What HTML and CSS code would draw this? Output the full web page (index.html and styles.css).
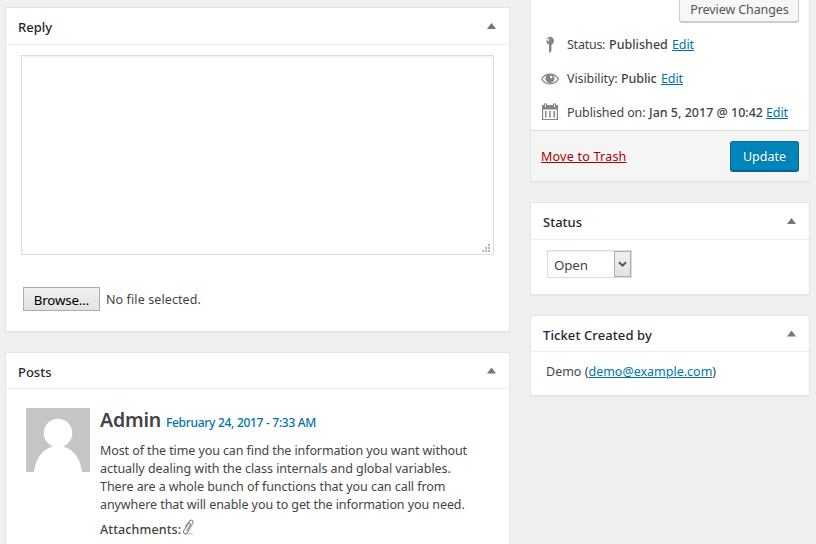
FILE: index.html
```html
<!DOCTYPE html>
<html lang="en">
<head>
<meta charset="utf-8">
<title>Edit Ticket</title>
<link rel="stylesheet" href="styles.css">
</head>
<body>
<div class="layout">
  <main class="column">
    <section class="panel reply">
      <header class="panel-head"><h2>Reply</h2><i class="toggle"></i></header>
      <div class="reply-body">
        <div class="editor">
          <svg class="grip" width="8" height="8" viewBox="0 0 8 8" fill="#b5b5b5"><path d="M6 0h2v2H6zM3 3h2v2H3zM6 3h2v2H6zM0 6h2v2H0zM3 6h2v2H3zM6 6h2v2H6z"/></svg>
        </div>
        <div class="file"><button class="browse">Browse…</button><span class="file-name">No file selected.</span></div>
      </div>
    </section>
    <section class="panel posts">
      <header class="panel-head"><h2>Posts</h2><i class="toggle"></i></header>
      <article class="post">
        <svg class="avatar" width="64" height="64" viewBox="0 0 64 64"><path fill="#c5c5c5" d="M0 0h64v64H0z"/><path fill="#fff" d="M8 64C9.500 50 17 41 27 38.500A14.300 14.300 0 1 1 37 38.500C47 41 54.500 50 56 64z"/></svg>
        <div class="post-content">
          <div class="post-head"><strong class="author">Admin</strong><span class="date">February 24, 2017 - 7:33 AM</span></div>
          <p class="post-text"><span class="l1">Most of the time you can find the information you want without</span><br><span class="l2">actually dealing with the class internals and global variables.</span><br><span class="l3">There are a whole bunch of functions that you can call from</span><br><span class="l4">anywhere that will enable you to get the information you need.</span></p>
          <div class="attachments"><strong>Attachments:</strong><svg width="13" height="17" viewBox="0 0 13 17" fill="none"><path d="M3 15h8" stroke="#ddd" stroke-width="2"/><path d="M3.500 7.500L7.500 2C9 .2 12 1.500 10.800 4L5.500 13.500C4 16 .5 14.500 1.800 11.500L6 5C7 3.300 9 4.300 8.200 6L4.800 11.500" stroke="#888" stroke-width="1.100" stroke-linecap="round"/></svg></div>
        </div>
      </article>
    </section>
  </main>
  <aside class="column side">
    <section class="panel publish">
      <div class="preview-row"><button class="preview">Preview Changes</button></div>
      <ul class="meta">
        <li><svg width="18" height="18" viewBox="0 0 18 18" fill="#82878c"><path fill-rule="evenodd" d="M9 1.700a4.200 4.200 0 0 1 1.500 8v5.800L9 18l-1-1V9.700A4.200 4.200 0 0 1 9 1.700zM7.200 3.700a1.100 1.100 0 1 0 .1 0z"/></svg><span class="label s1">Status:</span><b class="v1">Published</b><a href="#">Edit</a></li>
        <li><svg width="18" height="18" viewBox="0 0 18 18"><path d="M.7 10C4.500 3.500 13.500 3.500 17.300 10 13.500 16.500 4.500 16.500 .7 10z" fill="#fff" stroke="#82878c" stroke-width="1.300"/><circle cx="9" cy="9.500" r="4.500" fill="#82878c"/><circle cx="10.200" cy="8" r="1.200" fill="#fff"/></svg><span class="label s2">Visibility:</span><b class="v2">Public</b><a href="#">Edit</a></li>
        <li><svg width="18" height="18" viewBox="0 0 18 18"><path fill="#82878c" fill-rule="evenodd" d="M1 2h2V.5h3V2h6V.5h3V2h2v15H1zM2.200 6.500V16h13.600V6.500zM4 1.500v2.300h1V1.500zm9 0v2.300h1V1.500zM4 8h1.500v6.500H4zm4.200 0h1.500v6.500H8.200zm4.300 0H14v6.500h-1.500z"/></svg><span class="label s3">Published on:</span><b class="v3">Jan 5, 2017 @ 10:42</b><a href="#">Edit</a></li>
      </ul>
      <footer class="publish-foot"><a class="trash" href="#">Move to Trash</a><button class="update">Update</button></footer>
    </section>
    <section class="panel status">
      <header class="panel-head"><h2>Status</h2><i class="toggle"></i></header>
      <div class="status-body">
        <div class="select"><span>Open</span><div class="arrow"><svg width="9" height="7" viewBox="0 0 9 7" fill="none" stroke="#555" stroke-width="2"><path d="M1 1.200l3.500 3.500L8 1.200"/></svg></div></div>
      </div>
    </section>
    <section class="panel creator">
      <header class="panel-head"><h2 class="wide">Ticket Created by</h2><i class="toggle"></i></header>
      <p class="creator-text">Demo (<a href="#">demo@example.com</a>)</p>
    </section>
  </aside>
</div>
</body>
</html>
```

FILE: styles.css
```css
* { box-sizing: border-box; }
html { overflow: hidden; background: #f0f0f0; }
body { margin: 0; height: 544px; overflow: hidden; background: #f0f0f0; color: #444; font: 12.5px/18px "Noto Sans", "Open Sans", sans-serif; }
h2, p, ul { margin: 0; padding: 0; }
button { font: inherit; padding: 0; }
a { color: #0073aa; text-underline-offset: 1px; }
b, strong { font-weight: 500; }
.layout { display: grid; grid-template-columns: 505px 280px; column-gap: 20px; padding-left: 5px; height: 544px; overflow: hidden; }
.column { display: flex; flex-direction: column; gap: 20px; padding-top: 7px; }
.side { padding-top: 0; }
.panel { flex: none; background: #fff; border: 1px solid #e5e5e5; box-shadow: 0 1px 1px rgba(0,0,0,.04); }
.panel-head { height: 37px; border-bottom: 1px solid #eee; display: flex; align-items: center; justify-content: space-between; padding: 2px 13px 0 12px; }
.posts .panel-head, .creator .panel-head { height: 36px; }
h2 { font-size: 13px; line-height: 18px; font-weight: 500; color: #23282d; }
.wide { letter-spacing: .1px; }
.toggle { width: 9px; height: 6px; background: #72777c; clip-path: polygon(50% 0, 100% 100%, 0 100%); margin-top: -2px; }
.reply { height: 325px; }
.reply-body { padding: 10px 15px; }
.editor { width: 473px; height: 200px; border: 1px solid #ddd; box-shadow: inset 0 1px 2px rgba(0,0,0,.07); display: flex; justify-content: flex-end; align-items: flex-end; padding: 2px 3px; }
.file { display: flex; align-items: center; margin: 32px 0 0 2px; }
.browse { width: 77px; height: 24px; border: 1px solid #adadad; background: linear-gradient(#f0f0f0, #e2e2e2); color: #000; font-size: 13.3px; letter-spacing: -.15px; padding-top: 1px; }
.file-name { margin-left: 6px; padding-top: 2px; letter-spacing: .1px; }
.posts { height: 210px; }
.post { display: flex; gap: 10px; padding: 19px 20px; }
.avatar { flex: none; }
.post-content { white-space: nowrap; }
.post-head { display: flex; align-items: baseline; height: 34px; line-height: 23px; }
.author { font-size: 19.5px; width: 66px; font-weight: 600; letter-spacing: -.2px; }
.date { color: #0073aa; font-size: 12px; font-weight: 500; letter-spacing: -.3px; }
.l1 { letter-spacing: -.095px; }
.l2, .l3 { letter-spacing: -.05px; }
.l4 { letter-spacing: -.08px; }
.attachments { display: flex; margin-top: 5px; height: 20px; line-height: 22px; }
.attachments strong { width: 82px; letter-spacing: .1px; }
.publish { height: 182px; border-top: 0; display: flex; flex-direction: column; }
.preview-row { display: flex; justify-content: flex-end; padding-right: 10px; height: 27px; }
.preview { width: 120px; height: 28px; margin-top: -6px; padding: 3px 0 0 1px; border: 1px solid #ccc; border-radius: 3px; background: #f7f7f7; box-shadow: 0 1px 0 #ccc; color: #555; letter-spacing: -.1px; }
.meta { list-style: none; height: 103px; }
.meta li { display: flex; align-items: center; height: 34px; padding-left: 10px; white-space: nowrap; }
.meta svg { margin-right: 8px; }
.meta span, .meta b, .meta a { padding-top: 2px; }
.meta a { letter-spacing: -.1px; }
.s1 { width: 42px; letter-spacing: -.25px; }
.s2 { width: 54px; letter-spacing: -.1px; }
.s3 { width: 82px; letter-spacing: -.1px; }
.v1 { width: 63px; }
.v2 { width: 40px; letter-spacing: -.1px; }
.v3 { width: 117px; }
.publish-foot { flex: 1; background: #f5f5f5; border-top: 1px solid #ddd; display: flex; align-items: center; justify-content: space-between; padding: 0 10px; }
.trash { color: #a00; letter-spacing: .23px; padding-top: 2px; }
.update { width: 69px; height: 30px; padding-top: 2px; border: 1px solid; border-color: #0073aa #006799 #006799; border-radius: 3px; background: #0085ba; box-shadow: 0 1px 0 #006799; color: #fff; text-shadow: 0 -1px 1px #006799; }
.status { height: 93px; }
.status-body { padding: 10px 16px; }
.select { width: 85px; height: 28px; border: 1px solid #ddd; box-shadow: inset 0 1px 2px rgba(0,0,0,.07); display: flex; justify-content: space-between; padding-left: 6px; font-size: 13.3px; letter-spacing: -.1px; line-height: 28px; }
.arrow { width: 17px; border: 1px solid #adadad; background: linear-gradient(#f0f0f0, #e2e2e2); display: flex; align-items: center; justify-content: center; }
.creator { height: 81px; }
.creator-text { padding: 11px 15px; }
```
